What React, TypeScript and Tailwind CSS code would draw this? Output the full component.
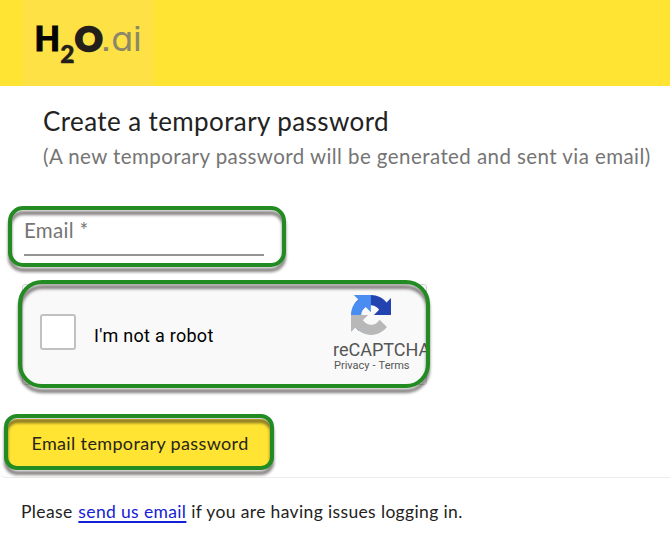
import React from "react";

function Frame({ className }: { className: string }) {
  return (
    <div
      className={`pointer-events-none absolute border-4 border-[#228b22] drop-shadow-[0_5px_1.5px_rgba(30,20,20,0.55)] ${className}`}
    />
  );
}

function Logo() {
  return (
    <svg width="132" height="86" viewBox="22 0 132 86" className="block bg-[#fee144]" aria-label="H2O.ai">
      <g fontFamily="Lato, sans-serif" fontWeight="900">
        <text x="34.4" y="51.4" fontSize="33.5" textLength="25.5" lengthAdjust="spacingAndGlyphs" fill="#050505" stroke="#050505" strokeWidth="1">H</text>
        <text x="60.2" y="62.6" fontSize="24.5" fill="#241f1b" stroke="#241f1b" strokeWidth="0.5">2</text>
        <text x="74.9" y="50.6" fontSize="33" textLength="27.5" lengthAdjust="spacingAndGlyphs" fill="#241f1b" stroke="#241f1b" strokeWidth="2.4">O</text>
      </g>
      <text x="100.8" y="51" fontFamily="Inter, sans-serif" fontWeight="400" fontSize="34" fill="#8c8768" textLength="41" lengthAdjust="spacingAndGlyphs" className="[font-feature-settings:'cv11','ss07']">.ai</text>
    </svg>
  );
}

function RecaptchaMark() {
  return (
    <svg width="40" height="40" viewBox="0 0 64 64" className="block">
      <path fill="#2243b0" d="M64 31.955l-.016-1.37V4.687l-7.16 7.16C50.964 4.674 42.033.093 32.033.093c-10.406 0-19.65 4.96-25.493 12.64l11.736 11.86a15.55 15.55 0 0 1 4.754-5.334c2.05-1.6 4.952-2.906 8.968-2.906.485 0 .86.057 1.135.163 4.976.393 9.288 3.14 11.828 7.124l-8.307 8.307L64 31.953" />
      <path fill="#4a8df0" d="M31.862.094l-1.37.016H4.594l7.16 7.16C4.58 13.147 0 22.08 0 32.06c0 10.406 4.96 19.65 12.64 25.493L24.5 45.817a15.55 15.55 0 0 1-5.334-4.754c-1.6-2.05-2.906-4.952-2.906-8.968 0-.485.057-.86.163-1.135.393-4.976 3.14-9.288 7.124-11.828l8.307 8.307L31.86.095" />
      <path fill="#b8b8b8" d="M.001 32.045l.016 1.37v25.898l7.16-7.16c5.86 7.173 14.774 11.754 24.774 11.754 10.406 0 19.65-4.96 25.493-12.64l-11.736-11.86a15.55 15.55 0 0 1-4.754 5.334c-2.05 1.6-4.952 2.906-8.968 2.906-.485 0-.86-.057-1.135-.163-4.976-.393-9.288-3.14-11.828-7.124l8.307-8.307L.002 32.047" />
    </svg>
  );
}

export default function App() {
  return (
    <div className="h-[534px] w-[670px] overflow-hidden bg-white font-['Lato',sans-serif] text-[#222]">
      <header className="flex h-[86px] bg-[#ffe433] pl-[22px]">
        <Logo />
      </header>

      <main className="flex h-[392px] flex-col items-start rounded-bl-[6px] border-b border-[#ececec]">
        <h1 className="mt-[17px] ml-[43px] h-9 text-[26px] leading-9 tracking-[0.4px] whitespace-nowrap">
          Create a temporary password
        </h1>
        <p className="ml-[43px] h-[35px] text-[20.5px] leading-[35px] tracking-[0.43px] whitespace-nowrap text-[#757575]">
          (A new temporary password will be generated and sent via email)
        </p>

        <div className="relative mt-8 ml-2 h-[61px] w-[278px] px-4 pt-[11px]">
          <div className="h-[39px] w-60 border-b-2 border-[#949494] text-[20.5px] leading-[27px] tracking-[0.3px] text-[#757575]">
            <label>Email *</label>
          </div>
          <Frame className="inset-0 rounded-[15px]" />
        </div>

        <div className="relative mt-[13px] ml-[18px] h-[108px] w-[412px] px-1 pt-1">
          <div className="flex h-[101px] w-[405px] overflow-hidden rounded-[3px] border border-[#d3d3d3] bg-[#f9f9f9] font-['Roboto',sans-serif]">
            <div className="mt-[29px] ml-[17px] size-9 shrink-0 rounded-[3px] border-2 border-[#c1c1c1] bg-white" />
            <span className="mt-[37px] ml-[18px] w-[239px] shrink-0 text-[18px] leading-7 tracking-[0.28px] whitespace-nowrap text-black">
              I'm not a robot
            </span>
            <div className="w-[100px] shrink-0 text-[#555]">
              <div className="mt-[10px] ml-[18px]"><RecaptchaMark /></div>
              <div className="mt-[5px] text-[18px] leading-5 whitespace-nowrap">reCAPTCHA</div>
              <div className="ml-px flex gap-[3px] text-[11px] leading-[11px] whitespace-nowrap">
                <span>Privacy</span><span>-</span><span>Terms</span>
              </div>
            </div>
          </div>
          <Frame className="inset-0 rounded-[24px]" />
        </div>

        <div className="relative mt-[26px] ml-1 h-14 w-[270px] px-1 pt-[5px]">
          <button className="block h-[49px] w-[262px] rounded-[9px] bg-[#ffe433] pl-[2px] text-[18px] leading-[49px] tracking-[0.36px] whitespace-nowrap text-[#29251a]">
            Email temporary password
          </button>
          <Frame className="inset-0 rounded-[13px]" />
        </div>
      </main>

      <footer className="pt-[21px] pl-[21px] text-[17.5px] leading-[26px] tracking-[0.36px] whitespace-nowrap">
        Please <a className="ml-px text-[#1420d4] underline decoration-2 underline-offset-[3px]">send us email</a> if you are having issues logging in.
      </footer>
    </div>
  );
}
